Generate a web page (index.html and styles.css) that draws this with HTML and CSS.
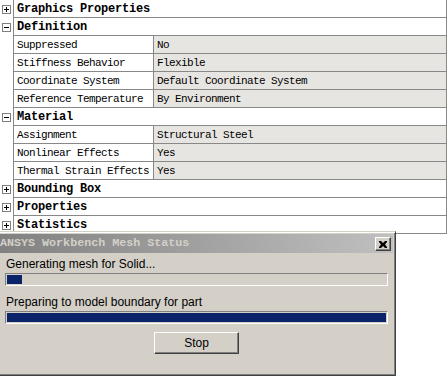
FILE: index.html
```html
<!DOCTYPE html>
<html>
<head>
<meta charset="utf-8">
<link rel="stylesheet" href="styles.css">
</head>
<body>
<div class="tree">
  <div class="row"><div class="tog"><svg width="9" height="9" viewBox="0 0 9 9"><rect x="0.5" y="0.5" width="8" height="8" fill="#fff" stroke="#808080"/><path d="M2 4.5H7M4.5 2V7" stroke="#000"/></svg></div><div class="cell head">Graphics Properties</div></div>
  <div class="row"><div class="tog"><svg width="9" height="9" viewBox="0 0 9 9"><rect x="0.5" y="0.5" width="8" height="8" fill="#fff" stroke="#808080"/><path d="M2 4.5H7" stroke="#000"/></svg></div><div class="cell head">Definition</div></div>
  <div class="row"><div class="tog"></div><div class="cell">Suppressed</div><div class="cell val">No</div></div>
  <div class="row"><div class="tog"></div><div class="cell">Stiffness Behavior</div><div class="cell val">Flexible</div></div>
  <div class="row"><div class="tog"></div><div class="cell">Coordinate System</div><div class="cell val">Default Coordinate System</div></div>
  <div class="row"><div class="tog"></div><div class="cell">Reference Temperature</div><div class="cell val">By Environment</div></div>
  <div class="row"><div class="tog"><svg width="9" height="9" viewBox="0 0 9 9"><rect x="0.5" y="0.5" width="8" height="8" fill="#fff" stroke="#808080"/><path d="M2 4.5H7" stroke="#000"/></svg></div><div class="cell head">Material</div></div>
  <div class="row"><div class="tog"></div><div class="cell">Assignment</div><div class="cell val">Structural Steel</div></div>
  <div class="row"><div class="tog"></div><div class="cell">Nonlinear Effects</div><div class="cell val">Yes</div></div>
  <div class="row"><div class="tog"></div><div class="cell">Thermal Strain Effects</div><div class="cell val">Yes</div></div>
  <div class="row"><div class="tog"><svg width="9" height="9" viewBox="0 0 9 9"><rect x="0.5" y="0.5" width="8" height="8" fill="#fff" stroke="#808080"/><path d="M2 4.5H7M4.5 2V7" stroke="#000"/></svg></div><div class="cell head">Bounding Box</div></div>
  <div class="row"><div class="tog"><svg width="9" height="9" viewBox="0 0 9 9"><rect x="0.5" y="0.5" width="8" height="8" fill="#fff" stroke="#808080"/><path d="M2 4.5H7M4.5 2V7" stroke="#000"/></svg></div><div class="cell head">Properties</div></div>
  <div class="row"><div class="tog"><svg width="9" height="9" viewBox="0 0 9 9"><rect x="0.5" y="0.5" width="8" height="8" fill="#fff" stroke="#808080"/><path d="M2 4.5H7M4.5 2V7" stroke="#000"/></svg></div><div class="cell head">Statistics</div></div>
</div>

<div class="dialog">
  <div class="titlebar">
    <span class="title">ANSYS Workbench Mesh Status</span>
    <div class="close"><svg width="8" height="7" viewBox="0 0 8 7"><path d="M0 0h2l2 2 2-2h2v1L6 3.5 8 6v1H6L4 5 2 7H0V6l2-2.5L0 1z" fill="#000"/></svg></div>
  </div>
  <div class="content">
    <div class="label first">Generating mesh for Solid...</div>
    <div class="bar"><div class="fill" style="width:15px"></div></div>
    <div class="label second">Preparing to model boundary for part</div>
    <div class="bar"><div class="fill" style="width:100%"></div></div>
    <div class="actions"><button class="btn">Stop</button></div>
  </div>
</div>
</body>
</html>
```
FILE: styles.css
```css
html, body {
  margin: 0;
  padding: 0;
}
body {
  width: 447px;
  height: 376px;
  overflow: hidden;
  position: relative;
  background: #ffffff;
}
.tree {
  display: flex;
  flex-direction: column;
  width: 447px;
  font-family: "Liberation Mono", monospace;
  color: #000;
}
.row {
  display: grid;
  grid-template-columns: 13px 140px 1fr;
  height: 18px;
}
.tog {
  display: flex;
  align-items: center;
  justify-content: center;
}
.tog svg {
  display: block;
}
.cell {
  border-left: 1px solid #888;
  border-bottom: 1px solid #888;
  display: flex;
  align-items: center;
  padding-left: 3px;
  font-size: 11px;
  letter-spacing: -0.6px;
  white-space: nowrap;
  overflow: hidden;
}
.val {
  background: #e7e5e1;
  border-right: 1px solid #888;
}
.head {
  grid-column: 2 / 4;
  font-weight: bold;
  font-size: 12px;
  letter-spacing: -0.2px;
  border-right: 1px solid #888;
}
.dialog {
  position: absolute;
  left: -8px;
  top: 231px;
  width: 398px;
  height: 139px;
  background: #d4d0c8;
  border: 1px solid;
  border-color: #d4d0c8 #404040 #404040 #d4d0c8;
  box-shadow: inset 1px 1px #ffffff, inset -1px -1px #808080;
  padding: 2px;
  font-family: "Liberation Sans", Arial, sans-serif;
}
.titlebar {
  height: 19px;
  display: flex;
  align-items: flex-start;
  background: linear-gradient(to right, #808080, #c0c0c0);
  padding-left: 5px;
}
.title {
  font-family: "Liberation Mono", monospace;
  font-weight: bold;
  font-size: 11.7px;
  line-height: 19px;
  color: #d4d0c8;
  white-space: nowrap;
}
.close {
  margin-left: auto;
  margin-right: 2px;
  margin-top: 3px;
  width: 16px;
  height: 14px;
  box-sizing: border-box;
  background: #d4d0c8;
  border: 1px solid;
  border-color: #ffffff #404040 #404040 #ffffff;
  box-shadow: inset -1px -1px #808080;
  display: flex;
  align-items: center;
  justify-content: center;
  padding-right: 1px;
}
.content {
  display: flex;
  flex-direction: column;
  padding: 0 5px 0 10px;
}
.label {
  font-size: 12px;
  line-height: 14px;
  color: #000;
  white-space: nowrap;
  padding-left: 1px;
}
.first {
  margin-top: 4px;
}
.second {
  margin-top: 9px;
}
.bar {
  height: 13px;
  box-sizing: border-box;
  border: 1px solid;
  border-color: #808080 #ffffff #ffffff #808080;
  padding: 1px;
  margin-top: 2px;
}
.fill {
  height: 100%;
  background: #0a246a;
}
.actions {
  display: flex;
  justify-content: center;
  margin-top: 8px;
}
.btn {
  width: 85px;
  height: 22px;
  box-sizing: border-box;
  background: #d4d0c8;
  border: 1px solid;
  border-color: #ffffff #404040 #404040 #ffffff;
  box-shadow: inset -1px -1px #808080;
  font-family: "Liberation Sans", Arial, sans-serif;
  font-size: 12px;
  color: #000;
  padding: 0;
}
```
